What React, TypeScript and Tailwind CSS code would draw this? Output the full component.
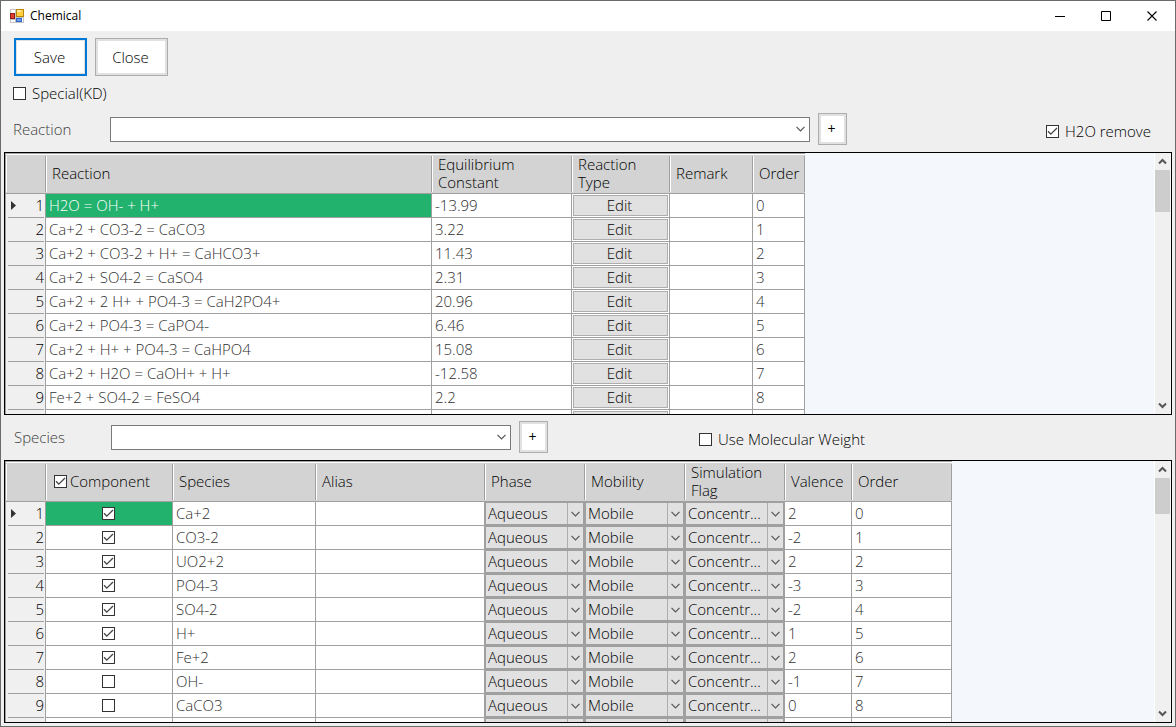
import React from 'react'

const reactions = [
  { equation: 'H2O = OH- + H+', constant: '-13.99' },
  { equation: 'Ca+2 + CO3-2 = CaCO3', constant: '3.22' },
  { equation: 'Ca+2 + CO3-2 + H+ = CaHCO3+', constant: '11.43' },
  { equation: 'Ca+2 + SO4-2 = CaSO4', constant: '2.31' },
  { equation: 'Ca+2 + 2 H+ + PO4-3 = CaH2PO4+', constant: '20.96' },
  { equation: 'Ca+2 + PO4-3 = CaPO4-', constant: '6.46' },
  { equation: 'Ca+2 + H+ + PO4-3 = CaHPO4', constant: '15.08' },
  { equation: 'Ca+2 + H2O = CaOH+ + H+', constant: '-12.58' },
  { equation: 'Fe+2 + SO4-2 = FeSO4', constant: '2.2' },
]

const species = [
  { name: 'Ca+2', component: true, valence: 2 },
  { name: 'CO3-2', component: true, valence: -2 },
  { name: 'UO2+2', component: true, valence: 2 },
  { name: 'PO4-3', component: true, valence: -3 },
  { name: 'SO4-2', component: true, valence: -2 },
  { name: 'H+', component: true, valence: 1 },
  { name: 'Fe+2', component: true, valence: 2 },
  { name: 'OH-', component: false, valence: -1 },
  { name: 'CaCO3', component: false, valence: 0 },
]

function CheckBox({ id, checked = false, label }: { id?: string; checked?: boolean; label?: string }) {
  return (
    <span className="relative block size-[13px] shrink-0">
      <input
        id={id}
        type="checkbox"
        defaultChecked={checked}
        aria-label={label}
        className="peer block size-[13px] appearance-none border border-[#333333] bg-white"
      />
      <svg viewBox="0 0 13 13" className="pointer-events-none absolute inset-0 hidden size-[13px] peer-checked:block">
        <path d="M2 6.3 L4.8 9.1 L11 3" fill="none" stroke="#444444" strokeWidth="1.3" />
      </svg>
    </span>
  )
}

function Chevron() {
  return (
    <svg viewBox="0 0 9 6" className="h-[6px] w-[9px]">
      <path d="M0.5 0.8 L4.5 4.8 L8.5 0.8" fill="none" stroke="#555555" strokeWidth="1.2" />
    </svg>
  )
}

function ComboBox({ id, className }: { id: string; className: string }) {
  return (
    <div className={'relative h-[25px] ' + className}>
      <select id={id} className="block h-full w-full appearance-none border border-[#7a7a7a] bg-white px-1" />
      <span className="pointer-events-none absolute inset-y-0 right-[5px] flex items-center">
        <Chevron />
      </span>
    </div>
  )
}

function CellSelect({ value, label }: { value: string; label: string }) {
  return (
    <div className="relative h-[23px]">
      <select
        aria-label={label}
        className="block h-full w-full appearance-none border border-[#a0a0a0] bg-[#e1e1e1] pr-4 pb-[2px] pl-[2px] text-black"
      >
        <option>{value}</option>
      </select>
      <span className="pointer-events-none absolute inset-y-px right-px flex w-4 items-center justify-center border-l border-[#adadad]">
        <Chevron />
      </span>
    </div>
  )
}

function AddButton({ label }: { label: string }) {
  return (
    <button
      aria-label={label}
      className="ml-2 flex h-8 w-[29px] shrink-0 items-center justify-center border border-[#adadad] bg-white pr-[2px] text-sm font-normal shadow-[inset_0_0_0_2px_#e1e1e1]"
    >
      +
    </button>
  )
}

function HeaderCell({ children }: { children?: React.ReactNode }) {
  return (
    <th className="h-10 border-t border-b border-t-white border-b-[#a0a0a0] bg-[#d3d3d3] p-0 text-left font-[350]">
      <div className="flex h-9 items-center border-r border-l border-r-[#a0a0a0] border-l-white pb-[2px] pl-[5px] leading-[18px]">
        {children}
      </div>
    </th>
  )
}

function RowHeader({ index }: { index: number }) {
  return (
    <th className="border-r border-[#a0a0a0] bg-[#f0f0f0] py-0 pr-px pl-[2px] font-[350]">
      <div className="flex h-6 items-center justify-between border-b border-[#a0a0a0] pb-px pl-[3px] leading-[18px]">
        <svg viewBox="0 0 5 9" className="h-[9px] w-[5px]">
          {index === 1 && <path d="M0 0 L5 4.5 L0 9 Z" fill="#333333" />}
        </svg>
        {index < 10 && index}
      </div>
    </th>
  )
}

function Cell({ children, selected = false, flush = false }: { children?: React.ReactNode; selected?: boolean; flush?: boolean }) {
  return (
    <td
      className={
        'h-6 border-r border-b border-[#a0a0a0] leading-[18px] whitespace-nowrap ' +
        (flush ? 'p-0 ' : 'px-[3px] pt-0 pb-[2px] ') +
        (selected ? 'bg-[#22b26e] text-white' : 'bg-white text-[#303030]')
      }
    >
      {children}
    </td>
  )
}

function ScrollBar({ thumb }: { thumb: string }) {
  return (
    <div className="flex w-4 shrink-0 flex-col items-center border-l border-white bg-[#f0f0f0]">
      <span className="flex h-[17px] items-center">
        <svg viewBox="0 0 9 7" className="h-[7px] w-[9px]">
          <path d="M1 5.5 L4.5 2 L8 5.5" fill="none" stroke="#555555" strokeWidth="2" />
        </svg>
      </span>
      <div className={'w-full bg-[#cdcdcd] ' + thumb} />
      <span className="mt-auto flex h-[17px] items-center">
        <svg viewBox="0 0 9 7" className="h-[7px] w-[9px]">
          <path d="M1 1.5 L4.5 5 L8 1.5" fill="none" stroke="#555555" strokeWidth="2" />
        </svg>
      </span>
    </div>
  )
}

function GridPanel({ widths, thumb, children }: { widths: number[]; thumb: string; children: React.ReactNode }) {
  return (
    <div className="mx-[3px] flex min-h-0 flex-1 border border-black bg-[#f4f7fc] pr-px">
      <div className="min-w-0 flex-1 overflow-hidden">
        <table className="w-0 table-fixed border-separate border-spacing-0 border-t border-l border-[#a0a0a0]">
          <colgroup>
            {widths.map((width, i) => (
              <col key={i} style={{ width }} />
            ))}
          </colgroup>
          {children}
        </table>
      </div>
      <ScrollBar thumb={thumb} />
    </div>
  )
}

function TitleBar() {
  return (
    <header className="flex h-[30px] shrink-0 items-center bg-white pl-[9px] text-xs text-black">
      <svg viewBox="0 0 14 14" className="size-[14px]">
        <rect width="14" height="14" fill="#c4c4c4" />
        <path d="M1 1h4v3H1z M1 11h4v2H1z M12 9h1v4h-1z" fill="#ffffff" />
        <rect x="6" y="0" width="8" height="8" fill="#b8860b" />
        <rect x="7" y="1" width="6" height="6" fill="#ffcf3f" />
        <rect x="7" y="1" width="4" height="2" fill="#ffe99a" />
        <rect x="0" y="4" width="5" height="6" fill="#8f1d14" />
        <rect x="1" y="5" width="3" height="4" fill="#d8402f" />
        <rect x="6" y="9" width="6" height="4" fill="#2f62c4" />
        <rect x="7" y="10" width="4" height="2" fill="#6ea0f0" />
      </svg>
      <h1 className="ml-[6px] font-normal">Chemical</h1>
      <div className="ml-auto flex h-full">
        <button aria-label="Minimize" className="flex w-[46px] items-center justify-center">
          <svg viewBox="0 0 11 11" className="size-[11px]">
            <path d="M0 5.5 H10" stroke="#000000" />
          </svg>
        </button>
        <button aria-label="Maximize" className="flex w-[46px] items-center justify-center">
          <svg viewBox="0 0 11 11" className="size-[11px]">
            <path d="M0.5 0.5 H9.5 V9.5 H0.5 Z" fill="none" stroke="#000000" />
          </svg>
        </button>
        <button aria-label="Close window" className="flex w-[46px] items-center justify-center">
          <svg viewBox="0 0 11 11" className="size-[11px]">
            <path d="M0.5 0.5 L9.5 9.5 M9.5 0.5 L0.5 9.5" stroke="#000000" strokeWidth="1.1" />
          </svg>
        </button>
      </div>
    </header>
  )
}

export default function App() {
  return (
    <div className="flex h-screen flex-col overflow-hidden border border-[#6b6b6b] bg-[#efefef] pb-[3px] font-['Open_Sans',sans-serif] text-[15px] font-[350] text-black">
      <TitleBar />

      <div className="mt-[7px] flex gap-2 pl-[13px]">
        <button className="h-[38px] w-[73px] border-2 border-[#0078d7] bg-white pr-[2px] shadow-[inset_0_0_0_1px_#e1e1e1]">Save</button>
        <button className="h-[38px] w-[73px] border border-[#adadad] bg-white pr-[2px] shadow-[inset_0_0_0_2px_#e1e1e1]">Close</button>
      </div>
      <label htmlFor="special" className="mt-[5px] flex h-6 items-center gap-[6px] self-start pl-3">
        <CheckBox id="special" />
        Special(KD)
      </label>

      <div className="mt-2 mb-[7px] flex items-center pr-6 pl-3">
        <label htmlFor="reaction" className="w-[97px] shrink-0 text-[#404040]">Reaction</label>
        <ComboBox id="reaction" className="w-[700px]" />
        <AddButton label="Add reaction" />
        <label htmlFor="h2o" className="ml-auto flex h-7 shrink-0 items-center gap-[6px] self-end">
          <CheckBox id="h2o" checked />
          H2O remove
        </label>
      </div>

      <GridPanel widths={[40, 386, 140, 98, 83, 52]} thumb="h-[42px]">
        <thead>
          <tr>
            <HeaderCell />
            <HeaderCell>Reaction</HeaderCell>
            <HeaderCell>Equilibrium<br />Constant</HeaderCell>
            <HeaderCell>Reaction<br />Type</HeaderCell>
            <HeaderCell>Remark</HeaderCell>
            <HeaderCell>Order</HeaderCell>
          </tr>
        </thead>
        <tbody>
          {[...reactions, null].map((row, i) => (
            <tr key={i}>
              <RowHeader index={i + 1} />
              <Cell selected={i === 0}>{row?.equation}</Cell>
              <Cell>{row?.constant}</Cell>
              <Cell flush>
                <button className="mx-px block h-[21px] w-[95px] border border-[#adadad] bg-[#e1e1e1] pr-[2px] pb-[2px] text-black">
                  {row && 'Edit'}
                </button>
              </Cell>
              <Cell />
              <Cell>{row && i}</Cell>
            </tr>
          ))}
        </tbody>
      </GridPanel>

      <div className="mt-[6px] mb-[7px] flex items-center pl-[13px]">
        <label htmlFor="species" className="w-[97px] shrink-0 text-[#404040]">Species</label>
        <ComboBox id="species" className="w-[400px]" />
        <AddButton label="Add species" />
        <label htmlFor="weight" className="ml-[151px] flex h-7 shrink-0 items-center gap-[6px] self-end">
          <CheckBox id="weight" />
          Use Molecular Weight
        </label>
      </div>

      <GridPanel widths={[40, 127, 143, 169, 100, 100, 100, 67, 100]} thumb="h-9">
        <thead>
          <tr>
            <HeaderCell />
            <HeaderCell>
              <label className="flex items-center gap-[3px] pl-[2px]">
                <CheckBox checked />
                Component
              </label>
            </HeaderCell>
            <HeaderCell>Species</HeaderCell>
            <HeaderCell>Alias</HeaderCell>
            <HeaderCell>Phase</HeaderCell>
            <HeaderCell>Mobility</HeaderCell>
            <HeaderCell>Simulation<br />Flag</HeaderCell>
            <HeaderCell>Valence</HeaderCell>
            <HeaderCell>Order</HeaderCell>
          </tr>
        </thead>
        <tbody>
          {[...species, null].map((row, i) => (
            <tr key={i}>
              <RowHeader index={i + 1} />
              <Cell selected={i === 0} flush>
                <div className="flex justify-center pr-px">
                  {row && <CheckBox checked={row.component} label={row.name + ' component'} />}
                </div>
              </Cell>
              <Cell>{row?.name}</Cell>
              <Cell />
              <Cell flush><CellSelect value={row ? 'Aqueous' : ''} label="Phase" /></Cell>
              <Cell flush><CellSelect value={row ? 'Mobile' : ''} label="Mobility" /></Cell>
              <Cell flush><CellSelect value={row ? 'Concentr...' : ''} label="Simulation flag" /></Cell>
              <Cell>{row?.valence}</Cell>
              <Cell>{row && i}</Cell>
            </tr>
          ))}
        </tbody>
      </GridPanel>
    </div>
  )
}
